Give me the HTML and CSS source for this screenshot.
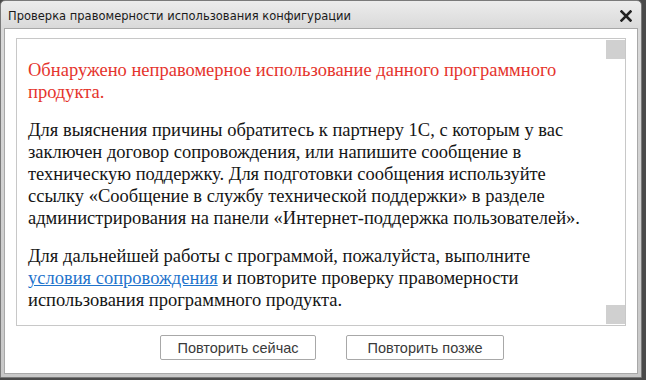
FILE: index.html
```html
<!DOCTYPE html>
<html lang="ru">
<head>
<meta charset="utf-8">
<link rel="stylesheet" href="styles.css">
</head>
<body>
<div class="window">
  <div class="titlebar">
    <span class="title">Проверка правомерности использования конфигурации</span>
    <svg class="close" width="12" height="12" viewBox="0 0 12 12"><path d="M1.5 1.5 L10.5 10.5 M10.5 1.5 L1.5 10.5" stroke="#222" stroke-width="2.6" stroke-linecap="square"/></svg>
  </div>
  <div class="client">
    <div class="content">
      <div class="text">
        <p class="para warn">Обнаружено неправомерное использование данного программного продукта.</p>
        <p class="para">Для выяснения причины обратитесь к партнеру 1С, с которым у вас заключен договор сопровождения, или напишите сообщение в техническую поддержку. Для подготовки сообщения используйте ссылку «Сообщение в службу технической поддержки» в разделе администрирования на панели «Интернет-поддержка пользователей».</p>
        <p class="para">Для дальнейшей работы с программой, пожалуйста, выполните <a class="link" href="#">условия сопровождения</a> и повторите проверку правомерности использования программного продукта.</p>
      </div>
      <div class="scroll">
        <div class="thumb"></div>
        <div class="thumb"></div>
      </div>
    </div>
    <div class="buttons">
      <button class="btn btn-now">Повторить сейчас</button>
      <button class="btn btn-later">Повторить позже</button>
    </div>
  </div>
</div>
</body>
</html>
```
FILE: styles.css
```css
html, body {
  margin: 0;
  padding: 0;
}
body {
  width: 646px;
  height: 380px;
  background: #4a4a4a;
  overflow: hidden;
}
.window {
  box-sizing: border-box;
  width: 642px;
  height: 378px;
  border: 1px solid #7a7a7a;
  border-radius: 5px 5px 0 0;
  background: linear-gradient(#ececec, #d9d9d9 28px, #c8c8c8);
  display: flex;
  flex-direction: column;
}
.titlebar {
  height: 27px;
  display: flex;
  align-items: center;
  justify-content: space-between;
  padding: 0 9px 0 7px;
  box-sizing: border-box;
}
.title {
  font-family: "DejaVu Sans", sans-serif;
  font-size: 11.5px;
  color: #1a1a1a;
  padding-top: 2px;
}
.close {
  margin-top: 2px;
}
.client {
  flex: 1;
  margin: 0 3px 3px 3px;
  background: #fff;
  border: 1px solid #a8a8a8;
  display: flex;
  flex-direction: column;
}
.content {
  margin: 9px 11px 0 11px;
  height: 288px;
  border: 1px solid #c8c8c8;
  display: flex;
  box-sizing: border-box;
}
.text {
  flex: 1;
  padding: 20px 12px 0 11px;
}
.para {
  margin: 0 0 16px 0;
  font-family: "Liberation Serif", "Times New Roman", serif;
  font-size: 18.5px;
  line-height: 22px;
  color: #151515;
}
.warn {
  color: #e5342d;
}
.link {
  color: #1f74cc;
  text-decoration: underline;
}
.scroll {
  width: 19px;
  display: flex;
  flex-direction: column;
  justify-content: space-between;
  padding: 1px 0;
}
.thumb {
  width: 19px;
  height: 19px;
  background: #d0d0d0;
}
.buttons {
  display: flex;
  gap: 30px;
  padding: 9px 0 0 155px;
}
.btn {
  box-sizing: border-box;
  height: 25px;
  background: #fff;
  border: 1px solid #a8a8a8;
  border-radius: 2px;
  font-family: "Liberation Sans", sans-serif;
  font-size: 14.5px;
  color: #3a3a3a;
  padding: 0;
}
.btn-now { width: 156px; }
.btn-later { width: 158px; }
```
